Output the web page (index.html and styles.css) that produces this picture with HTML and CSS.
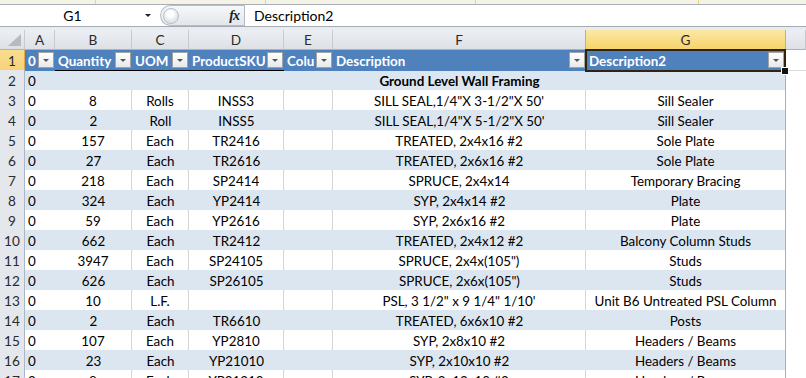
FILE: index.html
```html
<!DOCTYPE html>
<html>
<head>
<meta charset="utf-8">
<link rel="stylesheet" href="styles.css">
</head>
<body>
<div class="ribbon-edge"></div>
<div class="fbar">
  <div class="namebox"><span class="name">G1</span><span class="nb-arrow"></span></div>
  <div class="fxpill"><span class="dot"></span><span class="fx">fx</span></div>
  <div class="formula">Description2</div>
</div>
<div class="gap"></div>
<div class="sheet">
  <div class="row colhead">
    <div class="corner"><span class="tri"></span></div>
    <div class="ch">A</div><div class="ch">B</div><div class="ch">C</div><div class="ch">D</div><div class="ch">E</div><div class="ch">F</div><div class="ch sel">G</div><div class="ch"></div>
  </div>
  <div class="row hdr">
    <div class="rh sel">1</div>
    <div class="c a"><span class="lbl">0</span><span class="dd"></span></div>
    <div class="c t"><span class="lbl">Quantity</span><span class="dd"></span></div>
    <div class="c t"><span class="lbl">UOM</span><span class="dd"></span></div>
    <div class="c t"><span class="lbl">ProductSKU</span><span class="dd"></span></div>
    <div class="c"><span class="lbl">Colu</span><span class="dd"></span></div>
    <div class="c"><span class="lbl">Description</span><span class="dd"></span></div>
    <div class="c g g1"><span class="lbl">Description2</span><span class="dd"></span></div>
    <div class="c h"></div>
  </div>
  <div class="row band"><div class="rh">2</div><div class="c a">0</div><div class="c t"></div><div class="c t"></div><div class="c t"></div><div class="c t"></div><div class="c t b">Ground Level Wall Framing</div><div class="c t g"></div><div class="c h"></div></div>
  <div class="row plain"><div class="rh">3</div><div class="c a">0</div><div class="c t">8</div><div class="c t">Rolls</div><div class="c t">INSS3</div><div class="c t"></div><div class="c t">SILL SEAL,1/4"X 3-1/2"X 50'</div><div class="c t g">Sill Sealer</div><div class="c h"></div></div>
  <div class="row band"><div class="rh">4</div><div class="c a">0</div><div class="c t">2</div><div class="c t">Roll</div><div class="c t">INSS5</div><div class="c t"></div><div class="c t">SILL SEAL,1/4"X 5-1/2"X 50'</div><div class="c t g">Sill Sealer</div><div class="c h"></div></div>
  <div class="row plain"><div class="rh">5</div><div class="c a">0</div><div class="c t">157</div><div class="c t">Each</div><div class="c t">TR2416</div><div class="c t"></div><div class="c t">TREATED, 2x4x16 #2</div><div class="c t g">Sole Plate</div><div class="c h"></div></div>
  <div class="row band"><div class="rh">6</div><div class="c a">0</div><div class="c t">27</div><div class="c t">Each</div><div class="c t">TR2616</div><div class="c t"></div><div class="c t">TREATED, 2x6x16 #2</div><div class="c t g">Sole Plate</div><div class="c h"></div></div>
  <div class="row plain"><div class="rh">7</div><div class="c a">0</div><div class="c t">218</div><div class="c t">Each</div><div class="c t">SP2414</div><div class="c t"></div><div class="c t">SPRUCE, 2x4x14</div><div class="c t g">Temporary Bracing</div><div class="c h"></div></div>
  <div class="row band"><div class="rh">8</div><div class="c a">0</div><div class="c t">324</div><div class="c t">Each</div><div class="c t">YP2414</div><div class="c t"></div><div class="c t">SYP, 2x4x14 #2</div><div class="c t g">Plate</div><div class="c h"></div></div>
  <div class="row plain"><div class="rh">9</div><div class="c a">0</div><div class="c t">59</div><div class="c t">Each</div><div class="c t">YP2616</div><div class="c t"></div><div class="c t">SYP, 2x6x16 #2</div><div class="c t g">Plate</div><div class="c h"></div></div>
  <div class="row band"><div class="rh">10</div><div class="c a">0</div><div class="c t">662</div><div class="c t">Each</div><div class="c t">TR2412</div><div class="c t"></div><div class="c t">TREATED, 2x4x12 #2</div><div class="c t g">Balcony Column Studs</div><div class="c h"></div></div>
  <div class="row plain"><div class="rh">11</div><div class="c a">0</div><div class="c t">3947</div><div class="c t">Each</div><div class="c t">SP24105</div><div class="c t"></div><div class="c t">SPRUCE, 2x4x(105")</div><div class="c t g">Studs</div><div class="c h"></div></div>
  <div class="row band"><div class="rh">12</div><div class="c a">0</div><div class="c t">626</div><div class="c t">Each</div><div class="c t">SP26105</div><div class="c t"></div><div class="c t">SPRUCE, 2x6x(105")</div><div class="c t g">Studs</div><div class="c h"></div></div>
  <div class="row plain"><div class="rh">13</div><div class="c a">0</div><div class="c t">10</div><div class="c t">L.F.</div><div class="c t"></div><div class="c t"></div><div class="c t">PSL, 3 1/2" x 9 1/4" 1/10'</div><div class="c t g">Unit B6 Untreated PSL Column</div><div class="c h"></div></div>
  <div class="row band"><div class="rh">14</div><div class="c a">0</div><div class="c t">2</div><div class="c t">Each</div><div class="c t">TR6610</div><div class="c t"></div><div class="c t">TREATED, 6x6x10 #2</div><div class="c t g">Posts</div><div class="c h"></div></div>
  <div class="row plain"><div class="rh">15</div><div class="c a">0</div><div class="c t">107</div><div class="c t">Each</div><div class="c t">YP2810</div><div class="c t"></div><div class="c t">SYP, 2x8x10 #2</div><div class="c t g">Headers / Beams</div><div class="c h"></div></div>
  <div class="row band"><div class="rh">16</div><div class="c a">0</div><div class="c t">23</div><div class="c t">Each</div><div class="c t">YP21010</div><div class="c t"></div><div class="c t">SYP, 2x10x10 #2</div><div class="c t g">Headers / Beams</div><div class="c h"></div></div>
  <div class="row plain"><div class="rh">17</div><div class="c a">0</div><div class="c t">8</div><div class="c t">Each</div><div class="c t">YP21210</div><div class="c t"></div><div class="c t">SYP, 2x12x10 #2</div><div class="c t g">Headers / Beams</div><div class="c h"></div></div>
</div>
</body>
</html>
```
FILE: styles.css
```css
* { box-sizing: border-box; margin: 0; padding: 0; }
html, body { width: 806px; height: 378px; overflow: hidden; background: #fff; }
body { font-family: Lato, "Liberation Sans", sans-serif; font-size: 13.4px; color: #000; }

.ribbon-edge {
  height: 5px;
  border-bottom: 1px solid #a9afb6;
  background:
    linear-gradient(to right, transparent 95px, #e6d77a 95px, #e6d77a 96px, transparent 96px),
    linear-gradient(to right, transparent 265px, #e6d77a 265px, #e6d77a 266px, transparent 266px),
    linear-gradient(to right, transparent 475px, #e6d77a 475px, #e6d77a 476px, transparent 476px),
    linear-gradient(to right, transparent 698px, #e6d77a 698px, #e6d77a 699px, transparent 699px),
    #f4f3e6;
}
.fbar { display: flex; height: 22px; border-bottom: 1px solid #a5abb3; background: #fff; }
.namebox { width: 160px; display: flex; align-items: center; }
.name { flex: 1; text-align: center; font-size: 14px; }
.nb-arrow { width: 0; height: 0; border-left: 3px solid transparent; border-right: 3px solid transparent; border-top: 3px solid #222; margin-right: 9px; }
.fxpill {
  width: 84px; height: 21px; display: flex; align-items: center; justify-content: space-between;
  border: 1px solid #b4bcc6; border-right: none; border-radius: 11px 0 0 11px;
  background: linear-gradient(#f7f8fa, #e3e6ea); padding: 0 5px 0 2px;
}
.dot { width: 16px; height: 16px; border-radius: 50%; border: 1px solid #b9bfc7; background: radial-gradient(circle at 45% 35%, #fdfdfd 0 25%, #e4e7eb 60%, #d6dadf 100%); }
.fx { font-family: "Liberation Serif", serif; font-style: italic; font-weight: bold; font-size: 14px; color: #222; letter-spacing: -1px; }
.formula { flex: 1; border-left: 1px solid #b4bcc6; padding-left: 9px; line-height: 21px; font-size: 14px; }
.gap { height: 3px; background: #e8ebef; }

.row { display: grid; grid-template-columns: 25px 30px 77px 57px 95px 49px 253px 200px 20px; height: 20px; }

.colhead .ch, .corner {
  background: linear-gradient(#eceff3, #dde1e6);
  border-right: 1px solid #c5cbd3; border-bottom: 1px solid #a9b2bd;
  text-align: center; padding-top: 1px; line-height: 18px; color: #2b2b2b; font-size: 13.6px;
}
.corner { position: relative; }
.tri { position: absolute; right: 3px; bottom: 3px; width: 0; height: 0; border-left: 13px solid transparent; border-bottom: 12px solid #b6bbc2; }
.colhead .ch.sel { background: linear-gradient(#fbe8a6, #f7d46a); border-left: 1px solid #e3a84a; border-right: 1px solid #e3a84a; border-bottom: 1px solid #e39a3a; margin-left: -1px; }

.rh {
  background: #e4e7eb; border-right: 1px solid #a9b8c9; border-bottom: 1px solid #cfd4da;
  text-align: center; padding-top: 2px; line-height: 18px; color: #2b2b2b; font-size: 13.6px;
}
.rh.sel { background: linear-gradient(#f9dd8e, #f6d27a); border-right-color: #e3a84a; border-bottom-color: #e3a84a; }

.c { padding: 2px 2px 0; line-height: 18px; white-space: nowrap; overflow: hidden; text-align: center; }
.c.a { text-align: left; padding-left: 3px; }
.c.b { font-weight: bold; }
.band .c { background: #dce6f1; }
.plain .c { background: #fff; }
.c.t { border-bottom: 1px solid #000; }
.plain .c.t { border-right: 1px solid #d6d6d6; }
.c.g, .plain .c.g { border-right: 1px solid #95b3d7; }
.c.h, .band .c.h, .plain .c.h { background: #fff; border-bottom: 1px solid #d9dcdf; }

.hdr .c { background: #4f81bd; color: #fff; font-weight: bold; text-align: left; padding: 2px 18px 0 3px; position: relative; overflow: visible; }
.hdr .c.h { background: #fff; padding: 0; }
.lbl { display: block; overflow: hidden; white-space: nowrap; }
.dd {
  position: absolute; right: 1px; top: 2px; width: 16px; height: 16px;
  border: 1px solid #a3a3a3; background: linear-gradient(#ffffff, #e9e9e9);
}
.dd::after {
  content: ""; position: absolute; left: 4px; top: 6px; width: 0; height: 0;
  border-left: 3px solid transparent; border-right: 3px solid transparent; border-top: 3px solid #555;
}
.g1 { border-right: none; }
.g1::after {
  content: ""; position: absolute; left: -1px; top: -1px; right: -1px; bottom: -1px;
  border: 2px solid #30240f; pointer-events: none;
}
.g1::before {
  content: ""; position: absolute; right: -4px; bottom: -4px; width: 6px; height: 6px;
  background: #111; border: 1px solid #fff; z-index: 2;
}
```
